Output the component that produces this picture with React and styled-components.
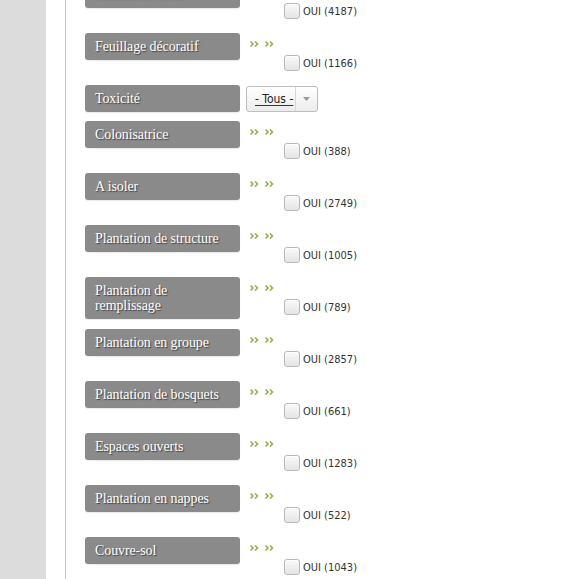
import React from 'react';
import styled, { createGlobalStyle } from 'styled-components';

const Global = createGlobalStyle`
  html, body { margin: 0; padding: 0; background: #fff; }
  body { overflow: hidden; }
`

const Page = styled.div`
  display: flex;
  width: 574px;
  height: 579px;
  overflow: hidden;
`
const Sidebar = styled.div`
  width: 46px;
  flex-shrink: 0;
  background: #dcdcdc;
`
const Gutter = styled.div`
  width: 19px;
  flex-shrink: 0;
  background: #fff;
`
const Main = styled.div`
  flex: 1;
  border-left: 1px solid #c4c4c4;
  padding-left: 19px;
`
const List = styled.div`
  margin-top: -19px;
  display: flex;
  flex-direction: column;
`
const Row = styled.div`
  display: flex;
  align-items: flex-start;
  height: ${p => p.$h}px;
`
const Label = styled.div`
  width: 155px;
  box-sizing: border-box;
  padding: 6px 10px;
  background: #8a8a8a;
  border-radius: 3px;
  color: #fff;
  font-family: "Liberation Serif", "DejaVu Serif", serif;
  font-size: 14px;
  line-height: 15px;
  letter-spacing: -0.1px;
  text-shadow: 1px 1px 1px rgba(0,0,0,0.55);
  box-shadow: 0 1px 1px rgba(0,0,0,0.08);
`
const Side = styled.div`
  display: flex;
  flex-direction: column;
`
const Arrows = styled.div`
  display: flex;
  gap: 6px;
  margin: 8px 0 0 10px;
  height: 6px;
`
const Check = styled.label`
  display: flex;
  align-items: center;
  gap: 3px;
  margin: 8px 0 0 44px;
  font-family: "DejaVu Sans Condensed", "Liberation Sans", sans-serif;
  font-size: 11px;
  color: #333;
`
const Box = styled.span`
  width: 14px;
  height: 14px;
  border: 1px solid #b8b8b8;
  border-radius: 3px;
  background: linear-gradient(#fafafa, #e4e4e4);
  box-shadow: inset 0 1px 0 #fff;
`
const Select = styled.div`
  display: flex;
  align-items: stretch;
  margin: 1px 0 0 6px;
  width: 72px;
  height: 26px;
  box-sizing: border-box;
  border: 1px solid #bdbdbd;
  border-radius: 3px;
  background: linear-gradient(#ffffff, #ececec);
  font-family: "DejaVu Sans Condensed", "Liberation Sans", sans-serif;
  font-size: 12px;
  color: #222;
`
const SelectText = styled.span`
  flex: 1;
  display: flex;
  align-items: center;
  padding-left: 8px;
  & > u { text-decoration-color: #333; text-underline-offset: 2px; }
`
const Caret = styled.span`
  width: 21px;
  border-left: 1px solid #d6d6d6;
  display: flex;
  align-items: center;
  justify-content: center;
`

const Chevrons = () => (
  <svg width="9" height="6" viewBox="0 0 9 6">
    <g fill="none" stroke="#8fae45" strokeWidth="1.5">
      <polyline points="0.5,0.5 3,3 0.5,5.5" />
      <polyline points="5,0.5 7.5,3 5,5.5" />
    </g>
  </svg>
)

const items = [
  { label: 'Plantation isolée', count: 4187 },
  { label: 'Feuillage décoratif', count: 1166 },
  { label: 'Toxicité', select: true },
  { label: 'Colonisatrice', count: 388 },
  { label: 'A isoler', count: 2749 },
  { label: 'Plantation de structure', count: 1005 },
  { label: 'Plantation de remplissage', count: 789, wrap: true },
  { label: 'Plantation en groupe', count: 2857 },
  { label: 'Plantation de bosquets', count: 661 },
  { label: 'Espaces ouverts', count: 1283 },
  { label: 'Plantation en nappes', count: 522 },
  { label: 'Couvre-sol', count: 1043 },
]

const App = () => (
  <Page>
    <Global />
    <Sidebar />
    <Gutter />
    <Main>
      <List>
        {items.map(it => (
          <Row key={it.label} $h={it.select ? 36 : 52}>
            <Label>{it.wrap ? <>Plantation de<br />remplissage</> : it.label}</Label>
            {it.select ? (
              <Select>
                <SelectText><u>- Tous -</u></SelectText>
                <Caret>
                  <svg width="7" height="4" viewBox="0 0 7 4"><polygon points="0,0 7,0 3.5,4" fill="#9a9a9a" /></svg>
                </Caret>
              </Select>
            ) : (
              <Side>
                <Arrows><Chevrons /><Chevrons /></Arrows>
                <Check><Box />OUI ({it.count})</Check>
              </Side>
            )}
          </Row>
        ))}
      </List>
    </Main>
  </Page>
)

export default App;
